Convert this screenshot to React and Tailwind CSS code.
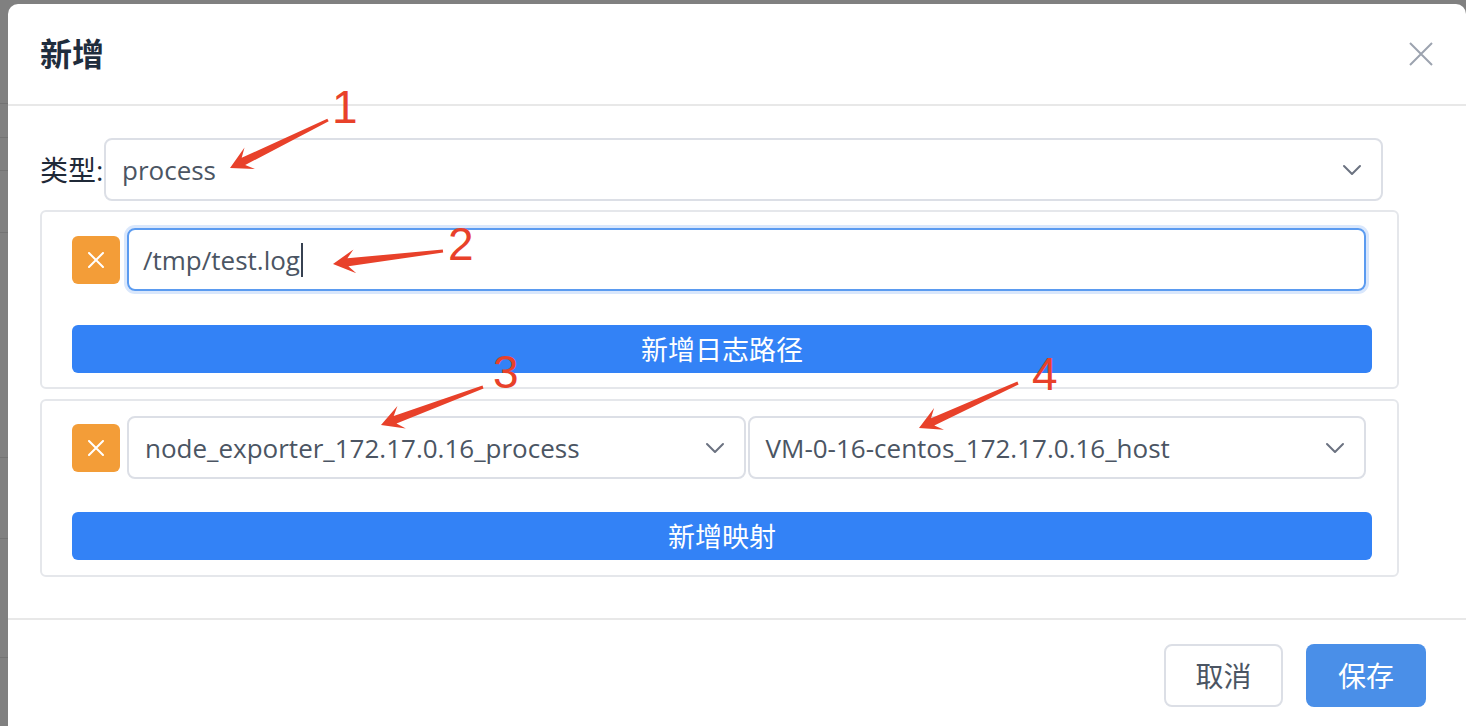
import React from 'react';

const FONT = "font-['Open_Sans','Noto_Sans_CJK_SC',sans-serif]";

function Chevron() {
  return (
    <svg width="20" height="12" viewBox="0 0 20 12" className="shrink-0">
      <polyline points="2,2 10,10 18,2" fill="none" stroke="#6b7280" strokeWidth="2" strokeLinecap="round" strokeLinejoin="round" />
    </svg>
  );
}

function RemoveButton() {
  return (
    <button className="w-[48px] h-[48px] shrink-0 rounded-[6px] bg-[#f39d38] flex items-center justify-center">
      <svg width="16" height="16" viewBox="0 0 16 16">
        <path d="M1 1L15 15M15 1L1 15" stroke="#fff" strokeWidth="2" strokeLinecap="round" />
      </svg>
    </button>
  );
}

function SelectBox({ value, className = '' }) {
  return (
    <div className={`h-[63px] border-2 border-[#dcdfe6] rounded-[8px] flex items-center justify-between pl-[16px] pr-[19px] ${className}`}>
      <span className="text-[26px] text-[#4b5563] leading-none">{value}</span>
      <Chevron />
    </div>
  );
}

function arrowPoints(x1, y1, x2, y2) {
  const dx = x2 - x1, dy = y2 - y1;
  const len = Math.hypot(dx, dy);
  const ux = dx / len, uy = dy / len;
  const nx = -uy, ny = ux;
  const nk = [x2 - ux * 15, y2 - uy * 15];
  const wb = [x2 - ux * 22, y2 - uy * 22];
  const pts = [
    [x1 + nx * 1.5, y1 + ny * 1.5],
    [nk[0] + nx * 4, nk[1] + ny * 4],
    [wb[0] + nx * 12, wb[1] + ny * 12],
    [x2, y2],
    [wb[0] - nx * 12, wb[1] - ny * 12],
    [nk[0] - nx * 4, nk[1] - ny * 4],
    [x1 - nx * 1.5, y1 - ny * 1.5],
  ];
  return pts.map((p) => p.map((v) => v.toFixed(1)).join(',')).join(' ');
}

const annotations = [
  { arrow: [328, 120, 230, 168], num: '1', x: 332, y: 123 },
  { arrow: [443, 251, 333, 264], num: '2', x: 448, y: 260 },
  { arrow: [483, 387, 381, 425], num: '3', x: 493, y: 388 },
  { arrow: [1018, 383, 919, 428], num: '4', x: 1032, y: 390 },
];

export default function App() {
  return (
    <div className={`relative w-[1466px] h-[726px] overflow-hidden bg-[#808080] flex ${FONT}`}>
      {/* dimmed page behind the dialog */}
      <div className="w-[8px] shrink-0 relative">
        {[103, 137, 170, 232, 457, 538, 657].map((y) => (
          <div key={y} className="absolute left-0 w-[8px] h-[1px] bg-[#737373]" style={{ top: y }} />
        ))}
      </div>

      {/* Dialog */}
      <div className="flex-1 mt-[4px] bg-white rounded-t-[10px] flex flex-col">
        {/* Header */}
        <div className="h-[102px] shrink-0 border-b-2 border-[#e8e8e8] flex items-center justify-between pl-[32px] pr-[33px]">
          <h2 className="text-[32px] font-semibold text-[#1f2d3d] leading-none">新增</h2>
          <svg width="24" height="24" viewBox="0 0 24 24">
            <path d="M1 1L23 23M23 1L1 23" stroke="#9ca3af" strokeWidth="2" />
          </svg>
        </div>

        {/* Body */}
        <div className="pl-[32px] pt-[32px] pb-[41px] flex flex-col">
          <div className="flex items-center w-[1343px]">
            <label className="w-[64px] shrink-0 text-[28px] text-[#1f2937] leading-none">类型:</label>
            <SelectBox value="process" className="flex-1" />
          </div>

          {/* Log path card */}
          <div className="mt-[9px] w-[1359px] border-2 border-[#e5e7eb] rounded-[6px] pl-[30px] pr-[25px] pt-[16px] pb-[14px]">
            <div className="flex items-center gap-[7px] pr-[6px]">
              <RemoveButton />
              <div className="flex-1 h-[63px] border-2 border-[#5b9bf0] rounded-[8px] ring-[3px] ring-[#d9e7fc] flex items-center pl-[14px]">
                <span className="text-[26px] text-[#4b5563] leading-none">/tmp/test.log</span>
                <span className="w-[2px] h-[34px] bg-[#374151] ml-[1px]" />
              </div>
            </div>
            <button className="mt-[34px] w-full h-[48px] rounded-[6px] bg-[#3382f6] text-white text-[27px] leading-none flex items-center justify-center">
              新增日志路径
            </button>
          </div>

          {/* Mapping card */}
          <div className="mt-[10px] w-[1359px] border-2 border-[#e5e7eb] rounded-[6px] pl-[30px] pr-[25px] pt-[15px] pb-[15px]">
            <div className="flex items-center gap-[7px] pr-[6px]">
              <RemoveButton />
              <div className="flex-1 flex gap-[2px]">
                <SelectBox value="node_exporter_172.17.0.16_process" className="flex-1" />
                <SelectBox value="VM-0-16-centos_172.17.0.16_host" className="flex-1" />
              </div>
            </div>
            <button className="mt-[33px] w-full h-[48px] rounded-[6px] bg-[#3382f6] text-white text-[27px] leading-none flex items-center justify-center">
              新增映射
            </button>
          </div>
        </div>

        {/* Footer */}
        <div className="border-t-2 border-[#e8e8e8] pt-[24px] pr-[40px] flex justify-end gap-[23px]">
          <button className="w-[119px] h-[63px] border-2 border-[#dcdfe6] rounded-[8px] bg-white text-[28px] text-[#4b5563] leading-none">
            取消
          </button>
          <button className="w-[120px] h-[63px] rounded-[8px] bg-[#4a8fe8] text-[28px] text-white leading-none">
            保存
          </button>
        </div>
      </div>

      {/* Red annotations drawn over the screenshot */}
      <svg className="absolute inset-0 pointer-events-none" width="1466" height="726">
        {annotations.map((a) => (
          <g key={a.num}>
            <polygon points={arrowPoints(...a.arrow)} fill="#e8412a" />
            <text x={a.x} y={a.y} fill="#e8412a" fontSize="46" fontFamily="Liberation Sans, Arial, sans-serif">
              {a.num}
            </text>
          </g>
        ))}
      </svg>
    </div>
  );
}
